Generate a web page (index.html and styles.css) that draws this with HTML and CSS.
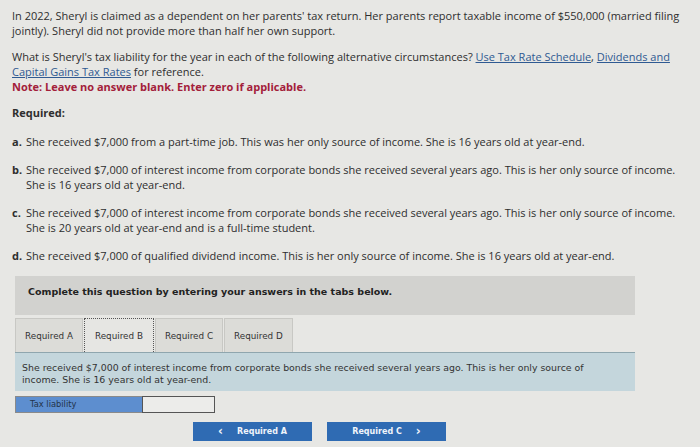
FILE: index.html
```html
<!DOCTYPE html>
<html>
<head>
<meta charset="utf-8">
<link rel="stylesheet" href="styles.css">
</head>
<body>
<div class="page">
  <p class="intro">In 2022, Sheryl is claimed as a dependent on her parents' tax return. Her parents report taxable income of $550,000 (married filing jointly). Sheryl did not provide more than half her own support.</p>
  <p class="question">What is Sheryl's tax liability for the year in each of the following alternative circumstances? <a href="#">Use Tax Rate Schedule</a>, <a href="#">Dividends and</a><br><a href="#">Capital Gains Tax Rates</a> for reference.<br><span class="note">Note: Leave no answer blank. Enter zero if applicable.</span></p>
  <p class="required">Required:</p>
  <ol class="items">
    <li><b>a.</b><span>She received $7,000 from a part-time job. This was her only source of income. She is 16 years old at year-end.</span></li>
    <li><b>b.</b><span>She received $7,000 of interest income from corporate bonds she received several years ago. This is her only source of income. She is 16 years old at year-end.</span></li>
    <li><b>c.</b><span>She received $7,000 of interest income from corporate bonds she received several years ago. This is her only source of income. She is 20 years old at year-end and is a full-time student.</span></li>
    <li><b>d.</b><span>She received $7,000 of qualified dividend income. This is her only source of income. She is 16 years old at year-end.</span></li>
  </ol>
  <div class="work">
    <div class="banner">Complete this question by entering your answers in the tabs below.</div>
    <div class="tabs">
      <div class="tab">Required A</div>
      <div class="tab active">Required B</div>
      <div class="tab">Required C</div>
      <div class="tab">Required D</div>
    </div>
    <div class="panel">She received $7,000 of interest income from corporate bonds she received several years ago. This is her only source of income. She is 16 years old at year-end.</div>
    <div class="answer">
      <div class="label">Tax liability</div>
      <div class="input"></div>
    </div>
    <div class="nav">
      <div class="btn"><span class="chev">&lsaquo;</span>Required A</div>
      <div class="btn">Required C<span class="chev">&rsaquo;</span></div>
    </div>
  </div>
</div>
</body>
</html>
```
FILE: styles.css
```css
html, body {
  margin: 0;
  padding: 0;
  background: #e7e7e4;
}
.page {
  width: 700px;
  height: 447px;
  padding: 8px 0 0 12px;
  box-sizing: border-box;
  font-family: "Open Sans", "Liberation Sans", sans-serif;
  font-size: 11px;
  color: #2e2e2e;
  overflow: hidden;
}
p { margin: 0; }
.intro { line-height: 15px; width: 680px; }
.question { line-height: 15px; margin-top: 11px; width: 670px; }
.question a { color: #2f5a92; text-decoration: underline; }
.note { color: #a3203a; font-weight: bold; }
.required { font-weight: bold; margin-top: 11px; line-height: 15px; }
.items { list-style: none; margin: 14px 0 0 0; padding: 0; }
.items li { display: flex; line-height: 15px; margin-bottom: 13px; width: 680px; }
.items li b { width: 14px; flex: none; }
.items li span { flex: 1; }
.work { margin-left: 3px; margin-top: 9px; }
.banner {
  width: 620px;
  height: 39px;
  box-sizing: border-box;
  background: #d2d2cf;
  font-family: "DejaVu Sans", sans-serif;
  font-weight: bold;
  font-size: 9.5px;
  padding: 10px 0 0 13px;
  color: #222;
}
.tabs { display: flex; margin-top: 3px; height: 34px; }
.tab {
  box-sizing: border-box;
  height: 34px;
  padding: 0 9px;
  display: flex;
  align-items: center;
  background: #dcdcd8;
  border: 1px solid #c8c8c4;
  border-bottom: none;
  font-family: "DejaVu Sans", sans-serif;
  font-size: 8.8px;
  color: #333;
  margin-right: 1px;
}
.tab.active {
  background: #e6e6e3;
  border: 1px dotted #555;
  border-bottom: none;
  padding: 0 10px;
}
.panel {
  width: 620px;
  box-sizing: border-box;
  height: 39px;
  background: #c4d6dc;
  border-top: 1px solid #8fa6ae;
  padding: 9px 20px 0 7px;
  font-family: "DejaVu Sans", sans-serif;
  font-size: 9.4px;
  line-height: 12px;
  color: #333;
}
.answer { display: flex; margin-top: 5px; height: 17px; }
.label {
  width: 127px;
  background: #5d8ecf;
  border: 1px solid #8a8a8a;
  border-right: none;
  box-sizing: border-box;
  font-family: "DejaVu Sans", sans-serif;
  font-size: 8.3px;
  color: #23334a;
  padding: 2px 0 0 14px;
}
.input {
  width: 73px;
  background: #ececea;
  border: 1px solid #555;
  box-sizing: border-box;
}
.nav { display: flex; gap: 15px; margin-left: 178px; margin-top: 9px; }
.btn {
  width: 119px;
  height: 19px;
  background: #2f6bb3;
  color: #f0f4fa;
  font-family: "DejaVu Sans", sans-serif;
  font-weight: bold;
  font-size: 8px;
  display: flex;
  align-items: center;
  justify-content: center;
  gap: 14px;
}
.chev { font-size: 12px; font-weight: bold; line-height: 1; margin-top: -2px; }
```
